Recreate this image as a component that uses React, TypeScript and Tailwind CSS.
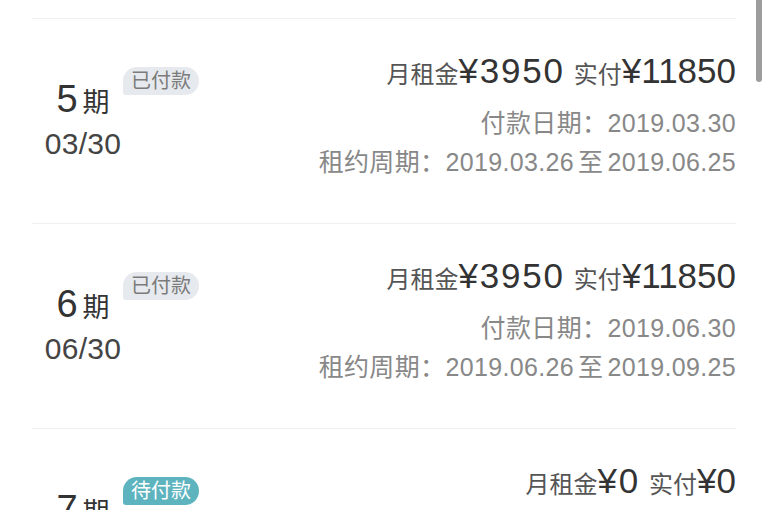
import React from 'react';

type Period = {
  no: number;
  day: string;
  paid: boolean;
  rent: string;
  actual: string;
  payDate?: string;
  from?: string;
  to?: string;
};

const periods: Period[] = [
  { no: 5, day: '03/30', paid: true, rent: '3950', actual: '11850', payDate: '2019.03.30', from: '2019.03.26', to: '2019.06.25' },
  { no: 6, day: '06/30', paid: true, rent: '3950', actual: '11850', payDate: '2019.06.30', from: '2019.06.26', to: '2019.09.25' },
  { no: 7, day: '09/30', paid: false, rent: '0', actual: '0' },
];

const Row = ({ p }: { p: Period }) => (
  <div className="flex justify-between border-t border-[#efefef] h-[205px]">
    <div className="relative w-[102px] pt-[60px] flex flex-col items-center text-[#333]">
      <div className="leading-[40px] whitespace-nowrap">
        <span className="text-[38px]">{p.no}</span>
        <span className="text-[27px] ml-[5px]">期</span>
      </div>
      <div className="-mt-[1px] text-[30px] leading-[36px] text-[#444] tracking-[0.3px]">{p.day}</div>
      <span
        className={`absolute top-[48px] left-[91px] h-[28px] px-[8px] text-[20px] leading-[28px] whitespace-nowrap rounded-tl-[14px] rounded-tr-[14px] rounded-br-[14px] rounded-bl-[3px] ${
          p.paid ? 'bg-[#e6e9ed] text-[#7b7b7b]' : 'bg-[#5db4bf] text-white'
        }`}
      >
        {p.paid ? '已付款' : '待付款'}
      </span>
    </div>
    <div className="pt-[32px] flex flex-col items-end text-right">
      <div className="leading-[40px] whitespace-nowrap text-[#333]">
        <span className="text-[24px] text-[#555]">月租金</span>
        <span className="text-[35px] tracking-[1.8px]">¥{p.rent}</span>
        <span className="text-[24px] text-[#555] ml-[9px]">实付</span>
        <span className="text-[35px]">¥{p.actual}</span>
      </div>
      {p.payDate && (
        <div className="mt-[6px] text-[25px] leading-[39px] text-[#888] whitespace-nowrap tracking-[0.35px]">
          付款日期：{p.payDate}
        </div>
      )}
      {p.from && (
        <div className="text-[25px] leading-[39px] text-[#888] whitespace-nowrap tracking-[0.35px]">
          租约周期：{p.from}
          <span className="mx-[4px]">至</span>
          {p.to}
        </div>
      )}
    </div>
  </div>
);

export default function App() {
  return (
    <div
      className="relative w-[768px] h-[510px] overflow-hidden bg-white"
      style={{ fontFamily: '"Liberation Sans", "Noto Sans CJK SC", sans-serif' }}
    >
      <div className="px-8 pt-[18px]">
        {periods.map((p) => (
          <Row key={p.no} p={p} />
        ))}
      </div>
      <div className="absolute right-[6px] top-0 w-[6px] h-[82px] rounded-b-full bg-[#9d9d9d]" />
    </div>
  );
}
